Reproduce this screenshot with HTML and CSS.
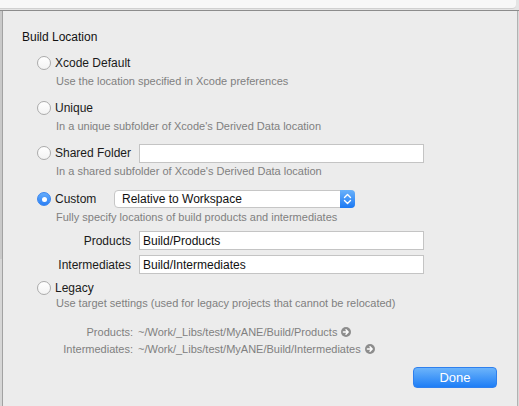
FILE: index.html
```html
<!DOCTYPE html>
<html>
<head>
<meta charset="utf-8">
<link rel="stylesheet" href="styles.css">
</head>
<body>
<div class="window">
  <div class="topbar"><div class="toolbar"></div></div>
  <div class="main">
    <div class="edge-left"></div>
    <div class="sheet">
      <div class="title">Build Location</div>

      <div class="opt o1">
        <div class="row"><span class="radio"></span><span class="label">Xcode Default</span></div>
        <div class="desc">Use the location specified in Xcode preferences</div>
      </div>

      <div class="opt o2">
        <div class="row"><span class="radio"></span><span class="label">Unique</span></div>
        <div class="desc">In a unique subfolder of Xcode's Derived Data location</div>
      </div>

      <div class="opt o3">
        <div class="row"><span class="radio"></span><span class="label w-shared">Shared Folder</span><span class="input wide"></span></div>
        <div class="desc">In a shared subfolder of Xcode's Derived Data location</div>
      </div>

      <div class="opt o4">
        <div class="row"><span class="radio on"></span><span class="label w-custom">Custom</span>
          <span class="popup"><span class="popup-text">Relative to Workspace</span>
            <span class="stepper"><svg width="15" height="18" viewBox="0 0 15 18"><path d="M4.5 7.5 7.5 4.5 10.5 7.5M4.5 10.5 7.5 13.5 10.5 10.5" fill="none" stroke="#fff" stroke-width="1.4" stroke-linecap="round" stroke-linejoin="round"/></svg></span>
          </span>
        </div>
        <div class="desc">Fully specify locations of build products and intermediates</div>
      </div>

      <div class="field f1"><span class="flabel">Products</span><span class="input wide"><span class="itext">Build/Products</span></span></div>
      <div class="field f2"><span class="flabel">Intermediates</span><span class="input wide"><span class="itext">Build/Intermediates</span></span></div>

      <div class="opt o5">
        <div class="row"><span class="radio"></span><span class="label">Legacy</span></div>
        <div class="desc legacy-desc">Use target settings (used for legacy projects that cannot be relocated)</div>
      </div>

      <div class="path p1"><span class="plabel">Products:</span><span class="pval">~/Work/_Libs/test/MyANE/Build/Products</span>
        <svg class="arrow" width="10" height="10" viewBox="0 0 10 10"><circle cx="5" cy="5" r="5" fill="#8d8d8d"/><path d="M2.4 5H7M5 2.8 7.2 5 5 7.2" fill="none" stroke="#fff" stroke-width="1.4" stroke-linecap="round" stroke-linejoin="round"/></svg></div>
      <div class="path p2"><span class="plabel">Intermediates:</span><span class="pval">~/Work/_Libs/test/MyANE/Build/Intermediates</span>
        <svg class="arrow" width="10" height="10" viewBox="0 0 10 10"><circle cx="5" cy="5" r="5" fill="#8d8d8d"/><path d="M2.4 5H7M5 2.8 7.2 5 5 7.2" fill="none" stroke="#fff" stroke-width="1.4" stroke-linecap="round" stroke-linejoin="round"/></svg></div>

      <div class="actions"><button class="done">Done</button></div>
    </div>
    <div class="edge-right"></div>
  </div>
</div>
</body>
</html>
```

FILE: styles.css
```css
html, body {
  margin: 0;
  padding: 0;
}
body {
  width: 519px;
  height: 406px;
  overflow: hidden;
  font-family: "Liberation Sans", Arial, sans-serif;
  background: #ececec;
}
.window {
  display: flex;
  flex-direction: column;
  height: 406px;
}
.topbar {
  flex: none;
  height: 11px;
  box-sizing: border-box;
  background: #e4e4e4;
  border-bottom: 1px solid #8c8c8c;
}
.toolbar {
  height: 8px;
  margin-right: 3px;
  background: #f7f7f7;
  border-bottom: 1px solid #d0d0d0;
  border-bottom-right-radius: 4px;
}
.main {
  flex: 1;
  display: flex;
}
.edge-left {
  width: 3px;
  flex: none;
  box-sizing: border-box;
  background: linear-gradient(#c9c9c9 0, #c9c9c9 248px, #d6d6d6 248px);
  border-right: 1px solid #a2a2a2;
}
.edge-right {
  width: 2px;
  flex: none;
  box-sizing: border-box;
  background: #d9d9d9;
  border-left: 1px solid #b2b2b2;
}
.sheet {
  flex: 1;
  background: #ececec;
  padding: 19px 20px 0 19px;
  display: flex;
  flex-direction: column;
}
.title {
  font-size: 12px;
  line-height: 15px;
  height: 15px;
  color: #111;
}
.opt {
  margin-left: 15px;
}
.o1 { margin-top: 8px; }
.o2 { margin-top: 9px; }
.o3 { margin-top: 9px; }
.o4 { margin-top: 10px; }
.o5 { margin-top: 4px; }
.row {
  display: flex;
  align-items: center;
  height: 20px;
}
.radio {
  flex: none;
  width: 14px;
  height: 14px;
  box-sizing: border-box;
  border-radius: 50%;
  border: 1px solid #ababab;
  background: linear-gradient(#ffffff, #f3f3f3);
  display: flex;
  align-items: center;
  justify-content: center;
}
.radio.on {
  border-color: #3a86ef;
  background: linear-gradient(#64acfb, #2a7ff5);
}
.radio.on::after {
  content: "";
  width: 5px;
  height: 5px;
  border-radius: 50%;
  background: #fff;
}
.label {
  margin-left: 4px;
  font-size: 12px;
  color: #1a1a1a;
  white-space: nowrap;
}
.w-shared { width: 84px; }
.w-custom { width: 59px; }
.desc {
  height: 16px;
  line-height: 16px;
  font-size: 11px;
  color: #808080;
  padding-left: 19px;
  white-space: nowrap;
}
.legacy-desc { margin-top: -3px; }
.input {
  display: flex;
  align-items: center;
  height: 19px;
  box-sizing: border-box;
  background: #fff;
  border: 1px solid #c4c4c4;
}
.input.wide { width: 285px; }
.itext {
  padding-left: 3px;
  font-size: 12px;
  color: #111;
}
.popup {
  display: flex;
  align-items: center;
  width: 241px;
  height: 18px;
  box-sizing: border-box;
  background: #fff;
  border: 1px solid #c6c6c6;
  border-radius: 4px;
}
.popup-text {
  flex: 1;
  padding-left: 7px;
  font-size: 12px;
  color: #111;
}
.stepper {
  width: 15px;
  height: 18px;
  margin: -1px -1px -1px 0;
  border-radius: 0 4px 4px 0;
  background: linear-gradient(#6ab2fb, #1a78f3);
  display: flex;
}
.field {
  display: flex;
  align-items: center;
  height: 19px;
}
.f1 { margin-top: 6px; }
.f2 { margin-top: 5px; }
.flabel {
  width: 109px;
  margin-right: 8px;
  text-align: right;
  font-size: 12px;
  color: #1a1a1a;
}
.path {
  display: flex;
  align-items: center;
  height: 16px;
  font-size: 11px;
  color: #808080;
}
.p1 { margin-top: 13px; }
.p2 { margin-top: 1px; }
.plabel {
  width: 111px;
  margin-right: 5px;
  text-align: right;
}
.pval { white-space: nowrap; }
.arrow {
  margin-left: 4px;
  flex: none;
}
.actions {
  display: flex;
  justify-content: flex-end;
  margin-top: 10px;
}
.done {
  width: 84px;
  height: 21px;
  border: 1px solid #2f80ee;
  border-radius: 4px;
  background: linear-gradient(#6cb4fb, #1e7ef6);
  color: #fff;
  font-family: "Liberation Sans", Arial, sans-serif;
  font-size: 13px;
  padding: 0;
}
```
